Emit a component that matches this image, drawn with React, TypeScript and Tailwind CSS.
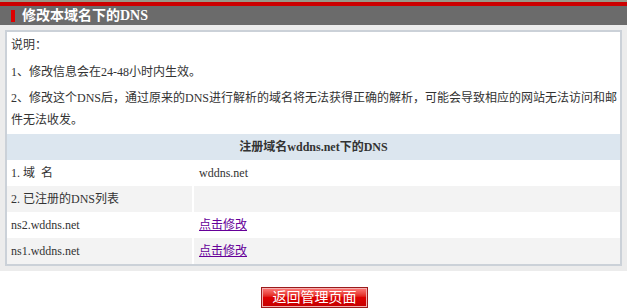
import React from 'react';

const rows = [
  { name: '1. 域\u00a0\u00a0名', value: 'wddns.net', link: false },
  { name: '2. 已注册的DNS列表', value: '', link: false },
  { name: 'ns2.wddns.net', value: '点击修改', link: true },
  { name: 'ns1.wddns.net', value: '点击修改', link: true },
];

const App = () => {
  return (
    <div className="w-[627px] h-[308px] bg-white overflow-hidden font-['Liberation_Serif','Noto_Sans_CJK_SC',serif] text-[12px] text-[#333]">
      {/* Top bars */}
      <div className="h-[2px] bg-[#9a9888]" />
      <div className="h-[4px] bg-[#cc0000]" />
      <div className="h-[19px] bg-[#6b6b6b] flex items-center pl-[11px]">
        <span className="w-[4px] h-[12px] bg-[#dd0000] mr-[7px]" />
        <span className="text-white font-bold text-[14px] leading-none">修改本域名下的DNS</span>
      </div>

      {/* Content frame */}
      <div className="bg-[#ececec] px-[5px] pt-[5px] pb-[5px]">
        <div className="border-2 border-[#cbd1d8] bg-white">
          <div className="px-[4px] pt-[2px]">
            <p className="leading-[22px]">说明：</p>
            <p className="leading-[22px] mt-[5px]">1、修改信息会在24-48小时内生效。</p>
            <p className="leading-[22px] mt-[4px] whitespace-nowrap">
              2、修改这个DNS后，通过原来的DNS进行解析的域名将无法获得正确的解析，可能会导致相应的网站无法访问和邮
              <br />
              件无法收发。
            </p>
          </div>
          <table className="w-full mt-[3px] border-separate border-spacing-0">
            <thead>
              <tr>
                <th colSpan={2} className="h-[26px] bg-[#dce6ef] text-center font-bold text-[#333] text-[12px]">
                  注册域名wddns.net下的DNS
                </th>
              </tr>
            </thead>
            <tbody>
              {rows.map((r, i) => (
                <tr key={i} className={i % 2 === 1 ? 'bg-[#f3f3f3]' : 'bg-white'}>
                  <td className="h-[26px] w-[187px] pl-[4px] border-r-2 border-white">{r.name}</td>
                  <td className="h-[26px] pl-[5px]">
                    {r.link ? (
                      <a href="#" className="text-[#660099] underline">{r.value}</a>
                    ) : (
                      r.value
                    )}
                  </td>
                </tr>
              ))}
            </tbody>
          </table>
        </div>
      </div>

      {/* Return button */}
      <div className="flex justify-center pt-[16px] pl-[2px]">
        <button className="w-[107px] h-[21px] border border-[#9b1b1b] bg-gradient-to-b from-[#ff7a7a] via-[#dd0000] to-[#c40000] text-white text-[14px] leading-none shadow-[inset_0_0_0_1px_#f4b0b0]">
          返回管理页面
        </button>
      </div>
    </div>
  );
};

export default App;
